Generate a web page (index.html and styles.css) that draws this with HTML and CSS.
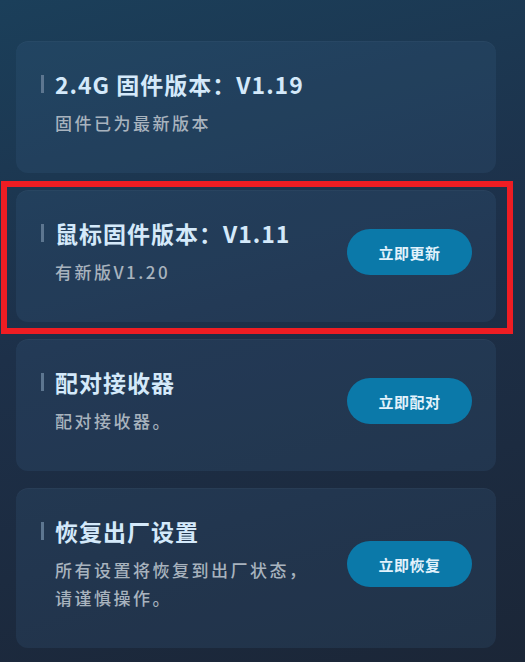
FILE: index.html
```html
<!DOCTYPE html>
<html lang="zh-CN">
<head>
  <meta charset="UTF-8">
  <title>设备设置</title>
  <link rel="stylesheet" href="styles.css">
</head>
<body>
  <div class="list">
    <div class="card">
      <div class="info">
        <h3 class="title">2.4G 固件版本：V1.19</h3>
        <p class="desc">固件已为最新版本</p>
      </div>
    </div>

    <div class="card marked">
      <div class="info">
        <h3 class="title">鼠标固件版本：V1.11</h3>
        <p class="desc">有新版V1.20</p>
      </div>
      <button class="action">立即更新</button>
    </div>

    <div class="card">
      <div class="info">
        <h3 class="title">配对接收器</h3>
        <p class="desc">配对接收器。</p>
      </div>
      <button class="action">立即配对</button>
    </div>

    <div class="card">
      <div class="info">
        <h3 class="title">恢复出厂设置</h3>
        <p class="desc">所有设置将恢复到出厂状态，请谨慎操作。</p>
      </div>
      <button class="action">立即恢复</button>
    </div>
  </div>
</body>
</html>
```

FILE: styles.css
```css
html {
  height: 100%;
}

body {
  margin: 0;
  min-height: 100%;
  font-family: "Noto Sans CJK SC", "Noto Sans", sans-serif;
  background: linear-gradient(165deg, #1b3f5a 0%, #1d3049 45%, #1b2637 100%);
  color: #d4e9fa;
}

.list {
  display: flex;
  flex-direction: column;
  gap: 17px;
  padding: 41px 29px 16px 16px;
}

.card {
  position: relative;
  display: flex;
  align-items: center;
  gap: 30px;
  padding: 28px 24px 36px 25px;
  border-radius: 12px;
  background: rgba(60, 100, 140, 0.2);
  box-shadow: inset 0 1px 0 rgba(255, 255, 255, 0.03);
}

/* red annotation frame */
.marked::after {
  content: "";
  position: absolute;
  top: -9px;
  left: -15px;
  right: -17px;
  bottom: -12px;
  border: 6px solid #ee1d23;
  pointer-events: none;
}

.info {
  flex: 1;
  min-width: 0;
}

.title {
  display: flex;
  align-items: center;
  gap: 11px;
  margin: 0;
  font-size: 23px;
  font-weight: bold;
  line-height: 30px;
  letter-spacing: 1px;
  color: #d4e9fa;
}

.title::before {
  content: "";
  width: 3px;
  height: 18px;
  background: #5d7690;
}

.desc {
  margin: 10px 0 0 14px;
  font-size: 17px;
  font-weight: 500;
  line-height: 28px;
  letter-spacing: 2.5px;
  color: #a8b3be;
}

.action {
  flex: none;
  width: 125px;
  height: 46px;
  border: none;
  border-radius: 23px;
  background: #0b79a9;
  color: #e2f2fc;
  font-family: inherit;
  font-size: 15px;
  font-weight: bold;
  letter-spacing: 0.5px;
  cursor: pointer;
}
```
